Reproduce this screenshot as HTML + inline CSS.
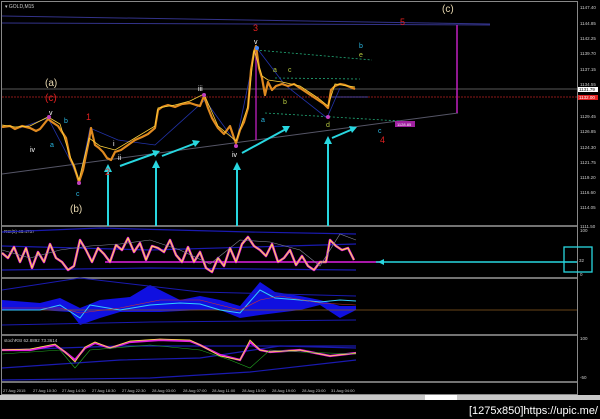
<!DOCTYPE html>
<html><head><meta charset="utf-8"><style>
html,body{margin:0;padding:0;background:#000;width:600px;height:419px;overflow:hidden}
svg{display:block}
text{font-family:"Liberation Sans",sans-serif}
</style></head><body>
<svg width="600" height="419" viewBox="0 0 600 419" xmlns="http://www.w3.org/2000/svg">
<rect width="600" height="419" fill="#000"/>
<!-- frame -->
<rect x="1.5" y="1.5" width="576" height="393" fill="none" stroke="#888" stroke-width="1"/>
<line x1="2" y1="226" x2="577" y2="226" stroke="#999" stroke-width="1.5"/>
<line x1="2" y1="278" x2="577" y2="278" stroke="#999" stroke-width="1.5"/>
<line x1="2" y1="335" x2="577" y2="335" stroke="#999" stroke-width="1.5"/>
<line x1="2" y1="382" x2="577" y2="382" stroke="#999" stroke-width="1.5"/>
<text x="5" y="8" fill="#ccc" font-size="5">▾ GOLD,M15</text>
<!-- main chart lines -->
<line x1="2" y1="16" x2="490" y2="24" stroke="#33338a" stroke-width="1"/>
<line x1="2" y1="23" x2="490" y2="25" stroke="#33338a" stroke-width="1"/>
<line x1="2" y1="89" x2="577" y2="89" stroke="#777" stroke-width="0.8"/>
<line x1="2" y1="97" x2="577" y2="97" stroke="#b22" stroke-width="0.8" stroke-dasharray="2,1"/>
<line x1="2" y1="174" x2="458" y2="113" stroke="#556" stroke-width="1"/>
<line x1="457" y1="25" x2="457" y2="113" stroke="#c020c0" stroke-width="1.5"/>
<line x1="256" y1="47" x2="256" y2="140" stroke="#c020c0" stroke-width="1.3"/>
<line x1="256" y1="50" x2="372" y2="60" stroke="#2a7" stroke-width="0.8" stroke-dasharray="2,2"/>
<line x1="275" y1="78" x2="360" y2="79" stroke="#2a7" stroke-width="0.8" stroke-dasharray="2,2"/>
<line x1="265" y1="113" x2="400" y2="121" stroke="#2a7" stroke-width="0.8" stroke-dasharray="2,2"/>
<line x1="330" y1="97" x2="368" y2="97" stroke="#55c" stroke-width="0.8"/>
<polyline fill="none" stroke="#2233aa" stroke-width="0.8" points="20,128 48,118 70,160 79,182 90,128 118,140 155,145 205,100 236,143 256,47 285,85 327,118 340,88"/>
<!-- price -->
<polyline fill="none" stroke="#e08a20" stroke-width="2.2" stroke-linejoin="round" points="2,127 10,126 15,129 22,126 30,128 36,131 40,129 48,119 52,122 58,126 62,132 66,138 70,158 74,166 79,182 83,170 86,155 89,140 91,128 95,145 99,148 103,152 107,158 111,160 115,152 121,150 128,145 135,140 142,137 148,134 155,128 158,110 162,107 168,105 175,107 182,104 190,103 196,105 200,106 204,96 208,108 212,118 218,128 224,134 230,126 234,138 236,143 240,130 244,122 248,108 251,70 254,52 256,46 259,68 262,78 265,95 268,82 272,90 276,86 282,84 288,86 294,84 300,88 306,92 312,96 318,100 324,104 328,108 331,90 335,86 340,84 345,85 350,87 355,89"/>
<polyline fill="none" stroke="#ffd23a" stroke-width="0.8" points="2,125 15,127 30,126 48,117 60,124 70,156 79,180 89,138 100,146 115,150 135,138 155,126 158,108 175,105 190,101 204,94 218,126 236,141 248,106 254,50 262,76 268,80 282,82 300,86 318,98 328,106 335,84 355,87"/>
<!-- arrows -->
<g stroke="#28d7e0" stroke-width="2" fill="#28d7e0">
<line x1="108" y1="226" x2="108" y2="170"/><polygon points="104,172 108,164 112,172" stroke="none"/>
<line x1="156" y1="226" x2="156" y2="166"/><polygon points="152,168 156,160 160,168" stroke="none"/>
<line x1="237" y1="226" x2="237" y2="168"/><polygon points="233,170 237,162 241,170" stroke="none"/>
<line x1="328" y1="226" x2="328" y2="142"/><polygon points="324,144 328,136 332,144" stroke="none"/>
<line x1="120" y1="166" x2="156" y2="153"/><polygon points="152,150 160,151 155,157" stroke="none"/>
<line x1="162" y1="156" x2="196" y2="143"/><polygon points="192,140 200,141 195,147" stroke="none"/>
<line x1="242" y1="153" x2="286" y2="129"/><polygon points="282,126 290,126 286,133" stroke="none"/>
<line x1="332" y1="138" x2="353" y2="129"/><polygon points="349,126 357,127 352,133" stroke="none"/>
</g>
<rect x="395" y="121" width="20" height="6" fill="#a020a0"/>
<text x="397" y="126" fill="#fff" font-size="4">1128.85</text>
<!-- wave labels -->
<g font-size="7" font-family="Liberation Serif,serif">
<text x="45" y="86" fill="#e8d8b0" font-size="10">(a)</text>
<text x="45" y="101" fill="#e02020" font-size="10">(c)</text>
<text x="70" y="212" fill="#e8d8b0" font-size="10">(b)</text>
<text x="442" y="12" fill="#e8d8b0" font-size="10">(c)</text>
<text x="253" y="31" fill="#e02020" font-size="9">3</text>
<text x="400" y="25" fill="#e02020" font-size="9">5</text>
<text x="86" y="120" fill="#e02020" font-size="9">1</text>
<text x="380" y="143" fill="#e02020" font-size="9">4</text>
<text x="105" y="175" fill="#e02020" font-size="9">2</text>
<text x="49" y="115" fill="#fff">v</text>
<text x="254" y="44" fill="#fff">v</text>
<text x="30" y="152" fill="#fff">iv</text>
<text x="232" y="157" fill="#fff">iv</text>
<text x="198" y="91" fill="#fff">iii</text>
<text x="113" y="146" fill="#fff">i</text>
<text x="118" y="160" fill="#fff">ii</text>
<text x="50" y="147" fill="#29b6e0">a</text>
<text x="64" y="123" fill="#29b6e0">b</text>
<text x="76" y="196" fill="#29b6e0">c</text>
<text x="261" y="122" fill="#29b6e0">a</text>
<text x="359" y="48" fill="#29b6e0">b</text>
<text x="378" y="133" fill="#29b6e0">c</text>
<text x="273" y="72" fill="#b5c840">a</text>
<text x="288" y="72" fill="#b5c840">c</text>
<text x="283" y="104" fill="#b5c840">b</text>
<text x="359" y="57" fill="#b5c840">e</text>
<text x="326" y="127" fill="#b5c840">d</text>
</g>
<g fill="#c040c0"><circle cx="49" cy="117" r="2"/><circle cx="79" cy="183" r="2"/><circle cx="236" cy="146" r="2"/><circle cx="204" cy="95" r="2"/><circle cx="328" cy="117" r="2"/><circle cx="257" cy="48" r="2" fill="#48f"/></g>
<!-- price axis -->
<g fill="#ccc" font-size="4.5">
<text x="580" y="9">1147.40</text><text x="580" y="25">1144.85</text><text x="580" y="40">1142.25</text>
<text x="580" y="55">1139.70</text><text x="580" y="71">1137.15</text><text x="580" y="86">1134.55</text>
<text x="580" y="118">1129.45</text><text x="580" y="133">1126.85</text><text x="580" y="149">1124.30</text>
<text x="580" y="164">1121.75</text><text x="580" y="179">1119.20</text><text x="580" y="194">1116.60</text>
<text x="580" y="209">1114.05</text><text x="580" y="228">1111.50</text>
<text x="580" y="232">100</text><text x="580" y="276">0</text><text x="580" y="340">100</text><text x="580" y="379">-50</text>
</g>
<rect x="578" y="87" width="20" height="5" fill="#fff"/><text x="579" y="91" fill="#000" font-size="4.5">1131.79</text>
<rect x="578" y="95" width="20" height="5" fill="#e02020"/><text x="579" y="99" fill="#fff" font-size="4.5">1132.00</text>
<!-- RSI panel -->
<text x="4" y="233" fill="#ccc" font-size="4.5">RSI(5) 46.4757</text>
<polyline fill="none" stroke="#1a1ab0" stroke-width="1.2" points="2,232 100,228 250,232 356,234"/>
<polyline fill="none" stroke="#1a1ab0" stroke-width="1.2" points="2,246 150,250 356,244"/>
<polyline fill="none" stroke="#1a1ab0" stroke-width="1.2" points="2,270 150,268 356,270"/>
<line x1="105" y1="262" x2="380" y2="262" stroke="#e020e0" stroke-width="1.5"/>
<line x1="376" y1="262" x2="577" y2="262" stroke="#28d7e0" stroke-width="1.5"/>
<polygon points="378,262 384,259 384,265" fill="#28d7e0"/>
<rect x="564" y="247" width="28" height="25" fill="none" stroke="#28d7e0" stroke-width="1.3"/>
<text x="579" y="262" fill="#ccc" font-size="4.5">32</text>
<polyline fill="none" stroke="#e020e0" stroke-width="2.5" stroke-linejoin="round" points="2,253 8,258 14,247 20,262 26,248 32,268 38,252 44,262 50,244 56,258 62,262 68,270 74,266 80,240 86,250 92,262 98,248 104,254 110,262 116,245 122,250 128,238 134,252 140,243 146,260 152,246 158,248 164,252 170,240 176,255 182,262 188,247 194,262 200,252 206,268 212,272 218,258 224,266 230,248 236,262 242,244 248,237 254,246 260,250 266,256 272,244 278,262 284,258 290,250 296,265 302,256 308,266 314,270 320,262 326,262 330,240 336,246 342,250 348,248 354,260"/>
<polyline fill="none" stroke="#ffe840" stroke-width="1" stroke-linejoin="round" points="2,253 8,258 14,247 20,262 26,248 32,268 38,252 44,262 50,244 56,258 62,262 68,270 74,266 80,240 86,250 92,262 98,248 104,254 110,262 116,245 122,250 128,238 134,252 140,243 146,260 152,246 158,248 164,252 170,240 176,255 182,262 188,247 194,262 200,252 206,268 212,272 218,258 224,266 230,248 236,262 242,244 248,237 254,246 260,250 266,256 272,244 278,262 284,258 290,250 296,265 302,256 308,266 314,270 320,262 326,262 330,240 336,246 342,250 348,248 354,260"/>
<polyline fill="none" stroke="#889" stroke-width="0.6" points="2,250 30,258 60,250 90,246 120,244 150,240 180,250 210,264 240,240 270,242 300,250 320,266 340,234 356,240"/>
<!-- MACD panel -->
<path d="M2,300 L40,303 L60,298 L80,308 L100,300 L130,297 L150,285 L160,290 L180,300 L200,296 L220,300 L240,306 L260,282 L275,292 L300,296 L320,300 L340,306 L356,306 L356,310 L340,318 L320,305 L300,310 L260,315 L240,318 L220,310 L200,310 L160,312 L120,312 L100,318 L80,325 L70,312 L40,310 L2,310 Z" fill="#1010e0"/>
<line x1="2" y1="310" x2="577" y2="310" stroke="#8a5a20" stroke-width="0.8"/>
<polyline fill="none" stroke="#1a1ab0" stroke-width="1" points="2,290 80,278 200,292 356,296"/>
<polyline fill="none" stroke="#1a1ab0" stroke-width="1" points="2,325 150,322 356,320"/>
<polyline fill="none" stroke="#3cf" stroke-width="1" points="2,310 40,310 60,305 80,318 90,305 120,310 150,305 180,303 200,304 220,310 240,313 260,290 275,298 300,300 320,302 340,300 356,301"/>
<polyline fill="none" stroke="#c33" stroke-width="0.6" points="2,308 60,308 80,313 120,308 160,300 200,300 240,310 260,300 280,296 320,303 356,305"/>
<!-- Stoch panel -->
<text x="4" y="342" fill="#ccc" font-size="4.5">stochRSI 62.8892 73.3614</text>
<polyline fill="none" stroke="#1a1ab0" stroke-width="1.2" points="2,368 120,360 200,358 280,346 356,348"/>
<polyline fill="none" stroke="#1a1ab0" stroke-width="1.2" points="2,350 120,346 356,346"/>
<polyline fill="none" stroke="#1a1ab0" stroke-width="1.2" points="2,380 150,378 250,372 356,360"/>
<polyline fill="none" stroke="#e020e0" stroke-width="2.2" points="2,350 30,350 55,345 65,352 75,360 85,348 95,343 110,348 130,342 160,340 190,341 200,345 220,355 240,360 250,342 260,350 270,352 300,350 330,356 356,353"/>
<polyline fill="none" stroke="#ffe840" stroke-width="0.8" points="2,350 30,349 55,344 65,352 75,362 85,347 95,342 110,348 130,341 160,339 190,340 200,345 220,356 240,360 250,340 260,350 270,352 300,350 330,356 356,353"/>
<polyline fill="none" stroke="#2a2" stroke-width="0.6" points="2,354 60,350 75,368 90,350 150,345 200,350 230,360 250,368 270,350 300,352 356,354"/>
<!-- time axis -->
<g fill="#ccc" font-size="4">
<text x="3" y="392">27 Aug 2015</text><text x="33" y="392">27 Aug 10:30</text><text x="62" y="392">27 Aug 14:30</text>
<text x="92" y="392">27 Aug 18:30</text><text x="122" y="392">27 Aug 22:30</text><text x="152" y="392">28 Aug 03:00</text>
<text x="183" y="392">28 Aug 07:00</text><text x="212" y="392">28 Aug 11:00</text><text x="242" y="392">28 Aug 15:00</text>
<text x="272" y="392">28 Aug 19:00</text><text x="302" y="392">28 Aug 23:00</text><text x="331" y="392">31 Aug 04:00</text>
</g>
<rect x="0" y="395" width="600" height="5" fill="#c8c8c8"/>
<rect x="425" y="395" width="32" height="5" fill="#fff"/>
<text x="598" y="414" fill="#fff" font-size="11" text-anchor="end" font-family="Liberation Mono,monospace">[1275x850]https://upic.me/</text>
</svg>
</body></html>
